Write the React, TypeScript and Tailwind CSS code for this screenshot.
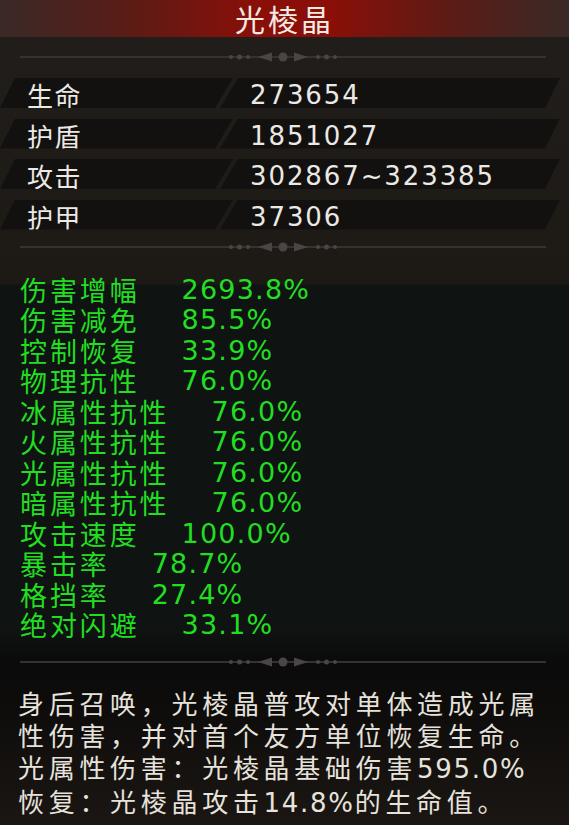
import React from 'react';

const baseStats = [
  { label: '生命', value: '273654' },
  { label: '护盾', value: '1851027' },
  { label: '攻击', value: '302867~323385' },
  { label: '护甲', value: '37306' },
];

const extraStats = [
  { label: '伤害增幅', value: '2693.8%' },
  { label: '伤害减免', value: '85.5%' },
  { label: '控制恢复', value: '33.9%' },
  { label: '物理抗性', value: '76.0%' },
  { label: '冰属性抗性', value: '76.0%' },
  { label: '火属性抗性', value: '76.0%' },
  { label: '光属性抗性', value: '76.0%' },
  { label: '暗属性抗性', value: '76.0%' },
  { label: '攻击速度', value: '100.0%' },
  { label: '暴击率', value: '78.7%' },
  { label: '格挡率', value: '27.4%' },
  { label: '绝对闪避', value: '33.1%' },
];

function Divider({ className = '' }: { className?: string }) {
  return (
    <svg width="569" height="12" viewBox="0 0 569 12" className={`block ${className}`}>
      <line x1="20" y1="6" x2="546" y2="6" stroke="#363230" strokeWidth="2" />
      <g fill="#4a4644">
        <circle cx="231" cy="6" r="2" />
        <circle cx="239.5" cy="6" r="2.5" />
        <circle cx="248" cy="6" r="2" />
        <polygon points="258,6 272,1.5 272,10.5" />
        <circle cx="283" cy="6" r="4.5" />
        <polygon points="308,6 294,1.5 294,10.5" />
        <circle cx="318" cy="6" r="2" />
        <circle cx="326.5" cy="6" r="2.5" />
        <circle cx="335" cy="6" r="2" />
      </g>
    </svg>
  );
}

const Num = ({ children }: { children: React.ReactNode }) => (
  <span className="font-['DejaVu_Sans',sans-serif] tracking-[1.7px]">{children}</span>
);

export default function App() {
  return (
    <div className="w-[569px] h-[825px] overflow-hidden font-['Noto_Sans_CJK_SC',sans-serif] bg-[linear-gradient(to_bottom,#221e1b_0px,#1d1a16_283px,#0f1311_286px,#0f1311_630px,#0b0b0b_660px,#0d0c0b_700px,#1b1613_825px)]">
      <div className="h-[37px] flex items-center justify-center bg-[linear-gradient(90deg,#3a2a27_0%,#5a1c16_22%,#8a0f08_45%,#8a0f08_58%,#5a1c16_80%,#3a2a27_100%)]">
        <span className="text-[30px] leading-[37px] tracking-[3px] text-[#f2e8e4]">光棱晶</span>
      </div>

      <Divider className="mt-[14px]" />

      <div className="mt-[15px] flex flex-col gap-[10.5px]">
        {baseStats.map((s) => (
          <div key={s.label} className="flex h-[30px] text-[#ece8e4] text-[26px] leading-[30px]">
            <div className="w-[233px] shrink-0 bg-[#121110] [clip-path:polygon(15px_0,233px_0,215px_30px,0_30px)] pl-[27px] pt-[2px] tracking-[1.5px]">
              {s.label}
            </div>
            <div className="w-[340px] -ml-[13px] shrink-0 bg-[#121110] [clip-path:polygon(18px_0,340px_0,325px_30px,0_30px)] pl-[30px] pt-[2px] tracking-[1.9px] font-['DejaVu_Sans',sans-serif]">
              {s.value}
            </div>
          </div>
        ))}
      </div>

      <Divider className="mt-[11px]" />

      <div className="mt-[22px] pl-[20px] flex flex-col text-[27px] leading-[30.5px] text-[#22de22]">
        {extraStats.map((s) => (
          <div key={s.label} className="flex">
            <span className="tracking-[2.9px]">{s.label}</span>
            <span className="ml-[42px] tracking-[1.2px] font-['DejaVu_Sans',sans-serif]">{s.value}</span>
          </div>
        ))}
      </div>

      <Divider className="mt-[15px]" />

      <div className="mt-[19px] pl-[18px] text-[26px] leading-[32px] tracking-[4.7px] text-[#e6e2dc] whitespace-nowrap">
        <div>身后召唤，光棱晶普攻对单体造成光属</div>
        <div>性伤害，并对首个友方单位恢复生命。</div>
        <div>光属性伤害：光棱晶基础伤害<Num>595.0%</Num></div>
        <div>恢复：光棱晶攻击<Num>14.8%</Num>的生命值。</div>
      </div>
    </div>
  );
}
